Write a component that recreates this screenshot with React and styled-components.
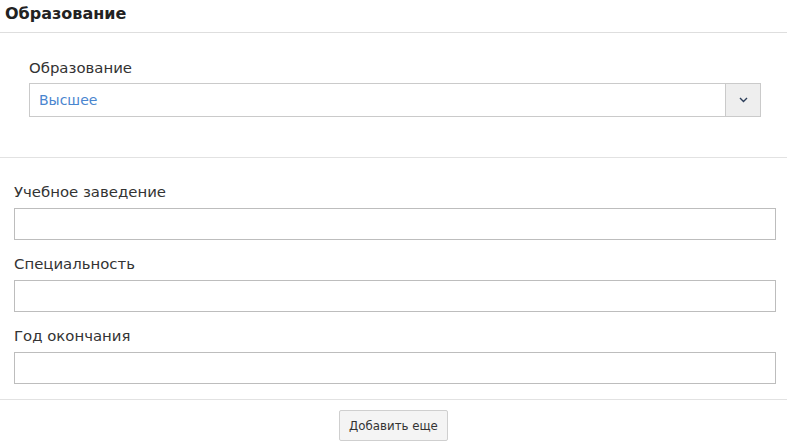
import React from "react";
import styled, { createGlobalStyle } from "styled-components";

const Global = createGlobalStyle`
  html, body { margin: 0; padding: 0; background: #fff; }
  body { font-family: "DejaVu Sans", Verdana, sans-serif; color: #333; }
  * { box-sizing: border-box; }
`;

const Page = styled.div`
  width: 787px;
  display: flex;
  flex-direction: column;
`;

const Header = styled.div`
  height: 33px;
  padding: 4px 0 0 5px;
  border-bottom: 1px solid #dedede;
  font-size: 16px;
  font-weight: bold;
  color: #222;
  line-height: 20px;
`;

const Section = styled.div`
  padding: ${(p) => p.$pad};
  border-bottom: ${(p) => (p.$line ? "1px solid #e2e2e2" : "none")};
  display: flex;
  flex-direction: column;
`;

const Field = styled.div`
  display: flex;
  flex-direction: column;
  & + & {
    margin-top: 14px;
  }
`;

const Label = styled.label`
  font-size: 14.9px;
  line-height: 20px;
  color: #333;
  margin-bottom: ${(p) => p.$gap || 6}px;
`;

const Input = styled.input`
  height: 32px;
  border: 1px solid #bdbdbd;
  background: #fff;
  padding: 0 8px;
  font: inherit;
  font-size: 14px;
  outline: none;
`;

const Select = styled.div`
  height: 34px;
  border: 1px solid #cacaca;
  display: flex;
  align-items: stretch;
`;

const SelectValue = styled.div`
  flex: 1;
  display: flex;
  align-items: center;
  padding-left: 9px;
  font-size: 14px;
  color: #4a86cf;
`;

const SelectButton = styled.div`
  width: 35px;
  border-left: 1px solid #cacaca;
  background: #eeeeee;
  display: flex;
  align-items: center;
  justify-content: center;
`;

const Footer = styled.div`
  display: flex;
  justify-content: center;
  padding-top: 10px;
`;

const Button = styled.button`
  width: 109px;
  height: 31px;
  padding: 0;
  border: 1px solid #cfcfcf;
  border-radius: 2px;
  background: #f4f4f4;
  font-family: "DejaVu Sans", Verdana, sans-serif;
  font-size: 11.8px;
  color: #333;
  cursor: pointer;
`;

export default function App() {
  return (
    <Page>
      <Global />
      <Header>Образование</Header>
      <Section $pad="25px 26px 40px 29px" $line>
        <Label $gap={5}>Образование</Label>
        <Select>
          <SelectValue>Высшее</SelectValue>
          <SelectButton>
            <svg width="9" height="6" viewBox="0 0 9 6">
              <path d="M1 1l3.5 3.5L8 1" fill="none" stroke="#2c3e5a" strokeWidth="1.4" />
            </svg>
          </SelectButton>
        </Select>
      </Section>
      <Section $pad="24px 11px 15px 14px" $line>
        <Field>
          <Label>Учебное заведение</Label>
          <Input />
        </Field>
        <Field>
          <Label>Специальность</Label>
          <Input />
        </Field>
        <Field>
          <Label>Год окончания</Label>
          <Input />
        </Field>
      </Section>
      <Footer>
        <Button>Добавить еще</Button>
      </Footer>
    </Page>
  );
}
